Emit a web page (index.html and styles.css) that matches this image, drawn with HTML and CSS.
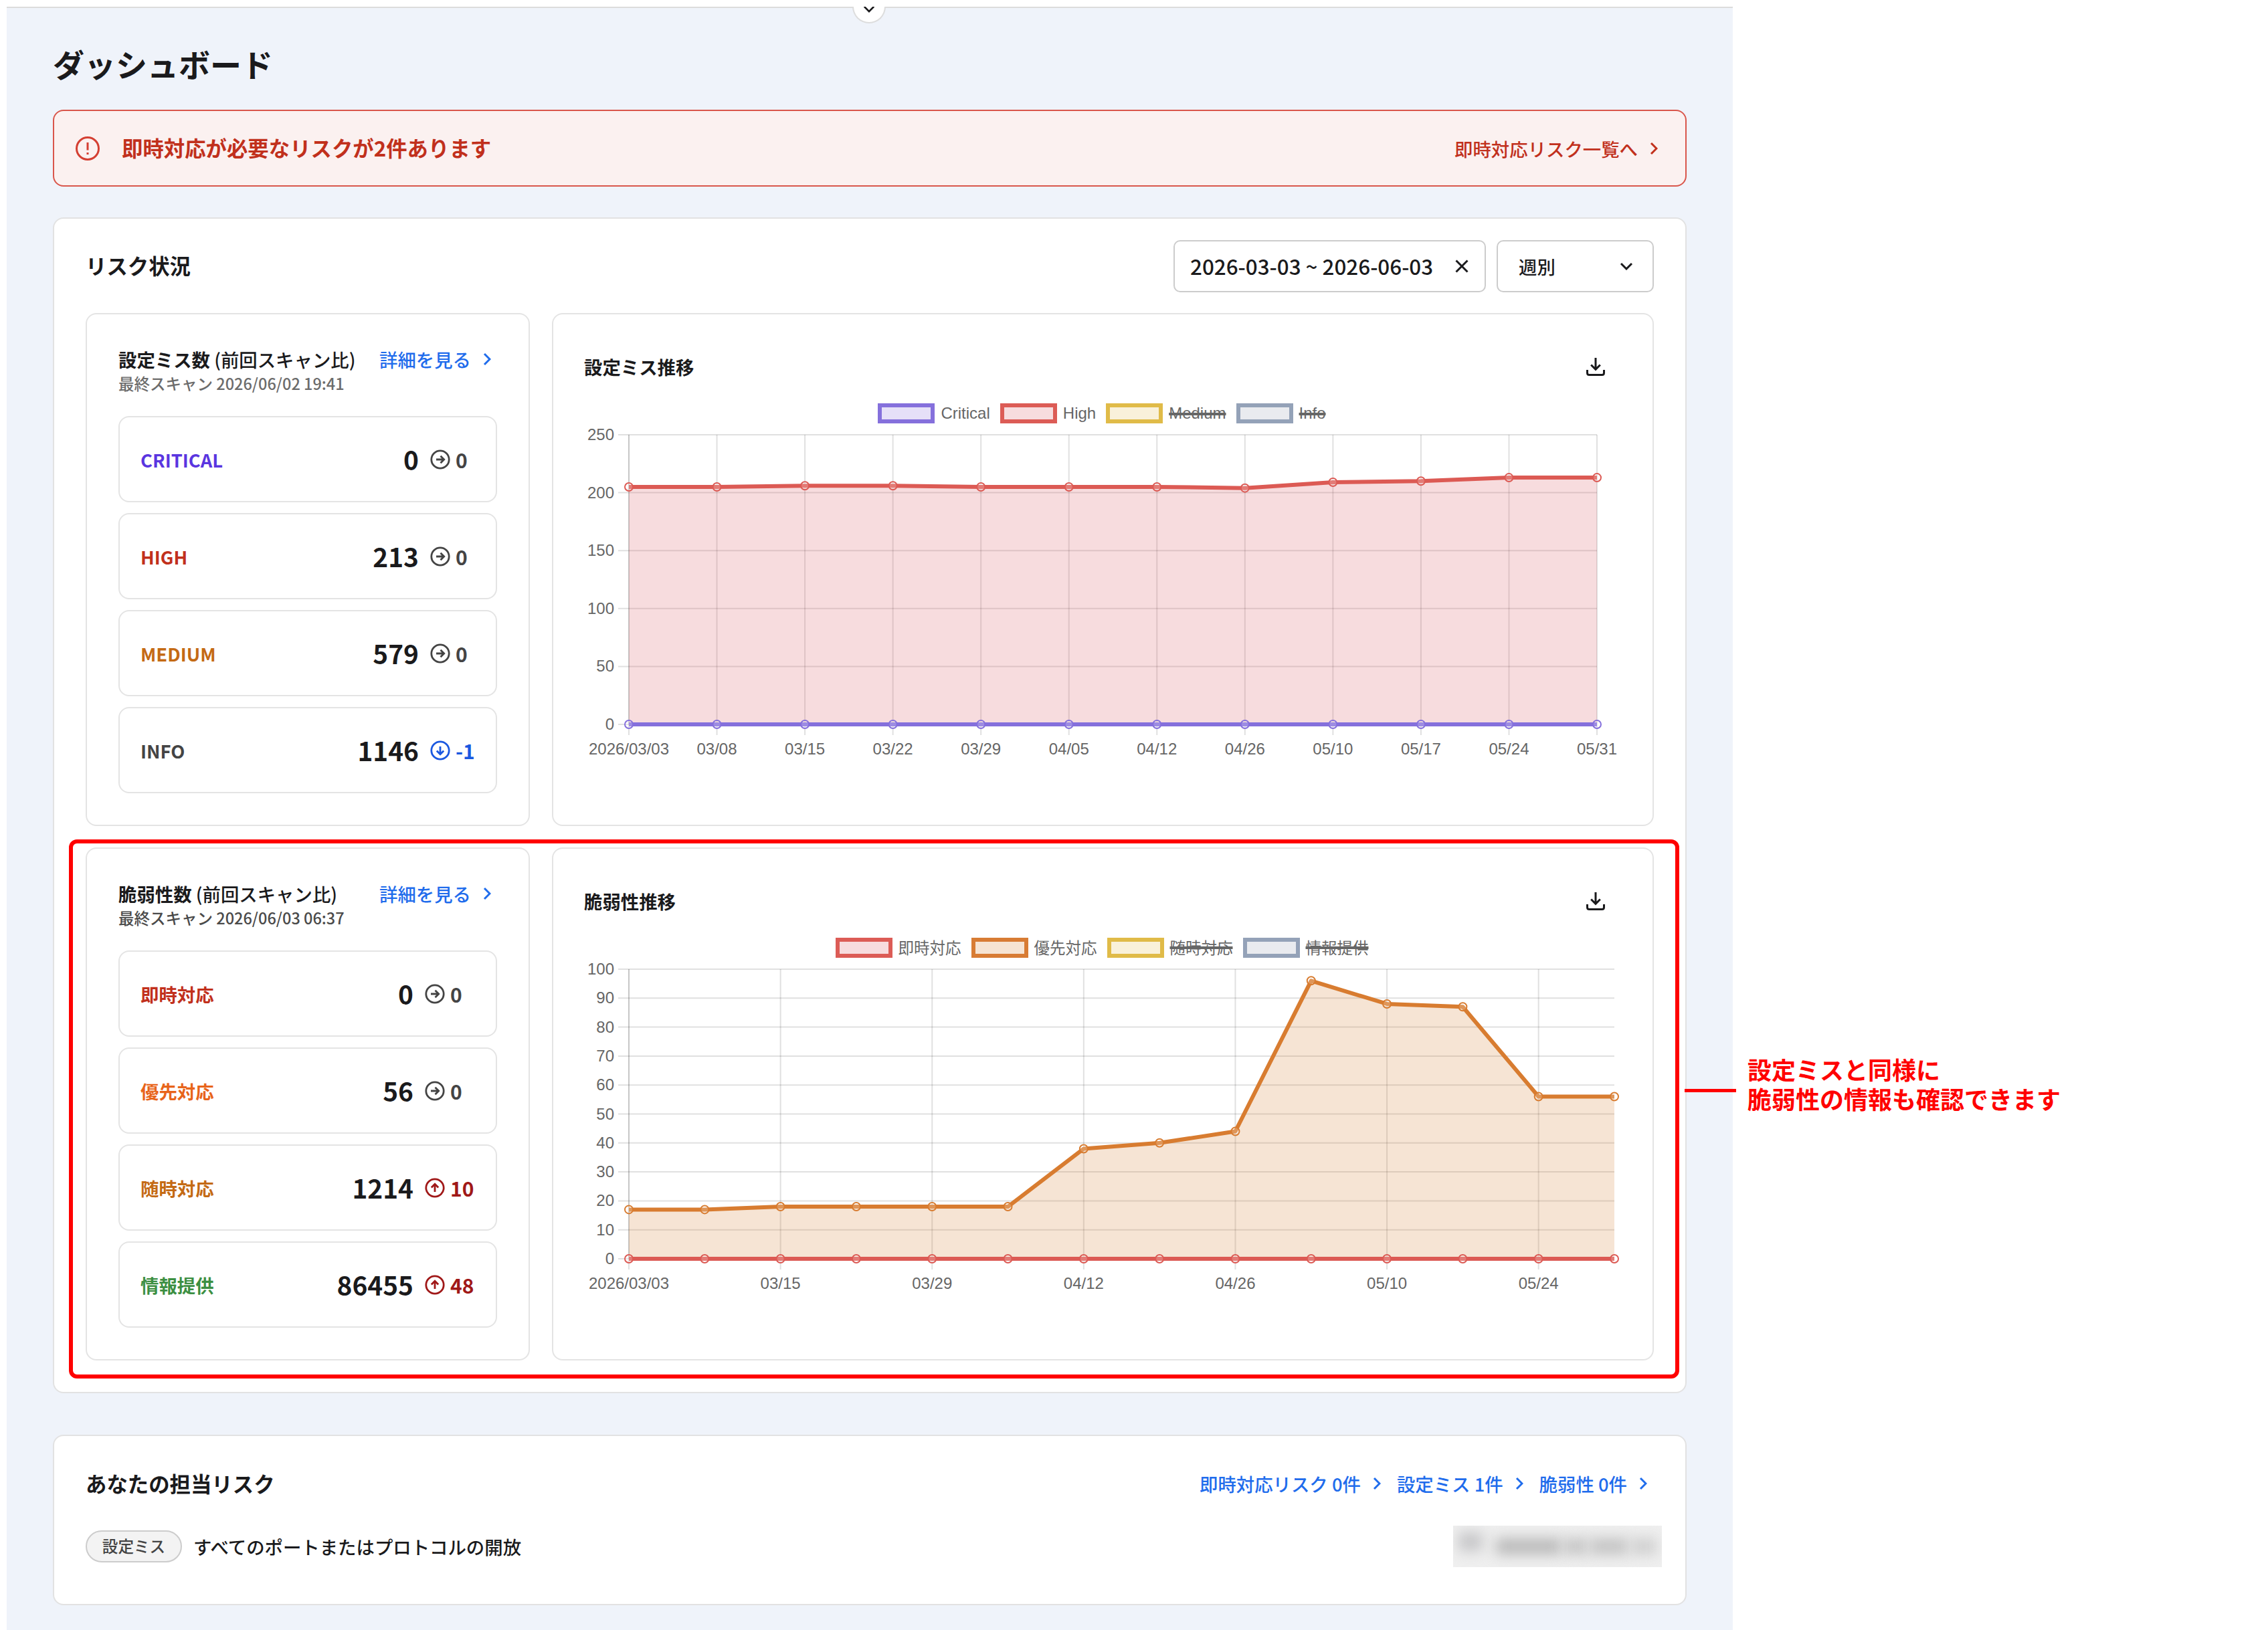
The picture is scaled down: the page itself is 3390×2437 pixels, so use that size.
FILE: index.html
```html
<!DOCTYPE html>
<html lang="ja">
<head>
    <meta charset="UTF-8">
    <meta name="viewport" content="width=device-width, initial-scale=1.0">
    <title>ダッシュボード</title>
    <link rel="stylesheet" href="styles.css">
</head>
<body>

<svg class="sprite" aria-hidden="true">
    <symbol id="chevron" viewBox="0 0 12 20"><path d="M2 2l8 8-8 8"/></symbol>
    <symbol id="chevron-down" viewBox="0 0 20 12"><path d="M2 2l8 8 8-8"/></symbol>
    <symbol id="close" viewBox="0 0 20 20"><path d="M1.500 1.500l17 17M18.500 1.500l-17 17"/></symbol>
    <symbol id="arrow" viewBox="0 0 30 30"><circle cx="15" cy="15" r="13.200"/><path d="M9 15h11.500M15.500 9.800l5.200 5.200-5.200 5.200"/></symbol>
    <symbol id="download" viewBox="0 0 30 30"><path d="M15 1v17M8.200 11.500l6.800 6.800 6.800-6.800M2.500 19v4.500q0 3 3 3h19q3 0 3-3v-4.500"/></symbol>
</svg>

<div class="page">
    <div class="toggle"><svg class="icon toggle-icon"><use href="#chevron-down"/></svg></div>

    <h1>ダッシュボード</h1>

    <div class="alert">
        <svg class="alert-icon" viewBox="0 0 38 38"><circle cx="19" cy="19" r="16.500"/><path d="M19 10v11.500M19 25v3"/></svg>
        <p class="alert-text">即時対応が必要なリスクが2件あります</p>
        <a class="link link-red">即時対応リスク一覧へ<svg class="icon chevron"><use href="#chevron"/></svg></a>
    </div>

    <section class="card status">
        <div class="card-head">
            <h2>リスク状況</h2>
            <div class="filters">
                <div class="field date">2026-03-03 ~ 2026-06-03<svg class="icon close"><use href="#close"/></svg></div>
                <div class="field select">週別<svg class="icon down"><use href="#chevron-down"/></svg></div>
            </div>
        </div>

        <div class="row">
            <div class="panel counts">
                <div class="counts-head">
                    <h3>設定ミス数 <span>(前回スキャン比)</span></h3>
                    <a class="link">詳細を見る<svg class="icon chevron"><use href="#chevron"/></svg></a>
                </div>
                <p class="scan">最終スキャン 2026/06/02 19:41</p>
                <ul class="narrow">
                    <li><b class="critical">CRITICAL</b><strong>0</strong><svg class="icon trend"><use href="#arrow"/></svg><em>0</em></li>
                    <li><b class="high">HIGH</b><strong>213</strong><svg class="icon trend"><use href="#arrow"/></svg><em>0</em></li>
                    <li><b class="medium">MEDIUM</b><strong>579</strong><svg class="icon trend"><use href="#arrow"/></svg><em>0</em></li>
                    <li class="fell"><b class="info">INFO</b><strong>1146</strong><svg class="icon trend"><use href="#arrow"/></svg><em>-1</em></li>
                </ul>
            </div>
            <div class="panel chart">
                <div class="chart-head">
                    <h3>設定ミス推移</h3>
                    <svg class="icon download"><use href="#download"/></svg>
                </div>
                <div class="legend">
                    <span class="item"><i class="purple"></i>Critical</span>
                    <span class="item"><i class="red"></i>High</span>
                    <span class="item off"><i class="yellow"></i><s>Medium</s></span>
                    <span class="item off"><i class="gray"></i><s>Info</s></span>
                </div>
                <svg class="plot" id="misconfigChart"></svg>
            </div>
        </div>

        <div class="row">
            <div class="panel counts">
                <div class="counts-head">
                    <h3>脆弱性数 <span>(前回スキャン比)</span></h3>
                    <a class="link">詳細を見る<svg class="icon chevron"><use href="#chevron"/></svg></a>
                </div>
                <p class="scan dark">最終スキャン 2026/06/03 06:37</p>
                <ul>
                    <li><b class="high">即時対応</b><strong>0</strong><svg class="icon trend"><use href="#arrow"/></svg><em>0</em></li>
                    <li><b class="orange">優先対応</b><strong>56</strong><svg class="icon trend"><use href="#arrow"/></svg><em>0</em></li>
                    <li class="rose"><b class="medium">随時対応</b><strong>1214</strong><svg class="icon trend"><use href="#arrow"/></svg><em>10</em></li>
                    <li class="rose"><b class="green">情報提供</b><strong>86455</strong><svg class="icon trend"><use href="#arrow"/></svg><em>48</em></li>
                </ul>
            </div>
            <div class="panel chart">
                <div class="chart-head">
                    <h3>脆弱性推移</h3>
                    <svg class="icon download"><use href="#download"/></svg>
                </div>
                <div class="legend legend-ja">
                    <span class="item"><i class="red"></i>即時対応</span>
                    <span class="item"><i class="brown"></i>優先対応</span>
                    <span class="item off"><i class="yellow"></i><s>随時対応</s></span>
                    <span class="item off"><i class="gray"></i><s>情報提供</s></span>
                </div>
                <svg class="plot" id="vulnChart"></svg>
            </div>
            <div class="highlight"></div>
            <div class="leader"></div>
            <p class="note">設定ミスと同様に<br>脆弱性の情報も確認できます</p>
        </div>
    </section>

    <section class="card mine">
        <div class="card-head">
            <h2>あなたの担当リスク</h2>
            <div class="links">
                <a class="link">即時対応リスク 0件<svg class="icon chevron"><use href="#chevron"/></svg></a>
                <a class="link">設定ミス 1件<svg class="icon chevron"><use href="#chevron"/></svg></a>
                <a class="link">脆弱性 0件<svg class="icon chevron"><use href="#chevron"/></svg></a>
            </div>
        </div>
        <div class="risk">
            <span class="tag">設定ミス</span>
            <span class="risk-name">すべてのポートまたはプロトコルの開放</span>
            <div class="masked"><i class="m1"></i><i class="m2"></i><i class="m3"></i><i class="m4"></i><i class="m5"></i></div>
        </div>
    </section>
</div>

<script src="script.js"></script>
</body>
</html>
```
FILE: styles.css
```css
* {
    box-sizing: border-box;
}
body {
    margin: 0;
    background: #fff;
    color: #1a1a1c;
    font-family: "Noto Sans CJK JP", sans-serif;
    font-size: 27.4px;
    overflow: hidden;
}
h1, h2, h3, p, ul {
    margin: 0;
    padding: 0;
}
.sprite {
    display: none;
}
.page {
    position: relative;
    width: 2580px;
    height: 2427px;
    margin: 10px 0 0 10px;
    padding: 47px 69px 0;
    background: #eff3fa;
    border-top: 2px solid #dcdcdc;
}
.icon {
    fill: none;
    stroke: currentColor;
    stroke-width: 3;
    flex: none;
    overflow: visible;
}

/* half-hidden header toggle */
.toggle {
    position: absolute;
    top: -2px;
    left: 1264px;
    width: 50px;
    height: 25px;
    background: #fff;
    border: 2px solid #ddd;
    border-top: 0;
    border-radius: 0 0 25px 25px;
    overflow: hidden;
}
.toggle-icon {
    display: block;
    width: 18px;
    height: 11px;
    margin: -2px auto 0;
}

h1 {
    height: 72px;
    line-height: 72px;
    font-size: 47px;
    font-weight: 700;
}
.alert {
    display: flex;
    align-items: center;
    height: 115px;
    margin-top: 33px;
    padding: 0 41px 0 31px;
    background: #fbf1f0;
    border: 2px solid #d9564b;
    border-radius: 16px;
    color: #c1301c;
}
.alert-icon {
    width: 38px;
    height: 38px;
    fill: none;
    stroke: #d43f32;
    stroke-width: 3;
}
.alert-text {
    flex: 1;
    margin: -2px 0 0 32px;
    font-size: 31.4px;
    font-weight: 700;
}
.link {
    display: flex;
    align-items: center;
    color: #1f6cec;
    font-weight: 500;
    white-space: nowrap;
}
.link-red {
    color: #c1301c;
}
.chevron {
    width: 12px;
    height: 20px;
    margin-left: 18px;
}

.card {
    background: #fff;
    border: 2px solid #e2e2e2;
    border-radius: 16px;
    padding: 0 47px;
}
.status {
    height: 1758px;
    margin-top: 46px;
}
.card-head {
    display: flex;
    align-items: center;
    justify-content: space-between;
}
.status .card-head {
    height: 141px;
}
h2 {
    font-size: 31.4px;
    font-weight: 700;
}
.status h2 {
    margin-top: -2px;
}
.filters {
    display: flex;
    gap: 16px;
}
.field {
    display: flex;
    align-items: center;
    justify-content: space-between;
    height: 78px;
    border: 2px solid #ccc;
    border-radius: 10px;
}
.date {
    width: 467px;
    padding: 0 24px 0 23px;
    font-size: 31.4px;
    font-weight: 500;
}
.select {
    width: 235px;
    padding: 0 29px 0 31px;
    font-weight: 500;
}
.close {
    width: 20px;
    height: 20px;
}
.down {
    width: 20px;
    height: 12px;
}

.row {
    position: relative;
    display: flex;
    gap: 33px;
    height: 767px;
    margin-bottom: 32px;
}
.panel {
    border: 2px solid #e4e4e4;
    border-radius: 16px;
}
.counts {
    width: 664px;
    padding: 46px 47px 0;
}
.chart {
    flex: 1;
    padding: 0 46px;
}
.counts-head {
    display: flex;
    align-items: center;
    justify-content: space-between;
    height: 41px;
    padding-right: 9px;
}
h3 {
    font-size: 27.4px;
    font-weight: 700;
    white-space: nowrap;
}
h3 span {
    font-weight: 500;
}
.scan {
    height: 37px;
    line-height: 33px;
    font-size: 23.5px;
    font-weight: 500;
    color: #6c6c6c;
}
.scan.dark {
    color: #4a4a4a;
}

.counts ul {
    display: grid;
    gap: 16px;
    margin-top: 28px;
    list-style: none;
}
.counts li {
    display: flex;
    align-items: center;
    height: 129px;
    padding: 0 31px;
    border: 2px solid #e4e4e4;
    border-radius: 16px;
    color: #444;
}
.counts b {
    flex: 1;
    font-weight: 700;
}
.counts strong {
    margin-top: -2px;
    font-size: 38.8px;
    color: #1a1a1c;
}
.trend {
    width: 30px;
    height: 30px;
    margin: 0 8px 0 17px;
    stroke-width: 2.8;
}
.counts em {
    width: 37px;
    font-size: 30px;
    font-style: normal;
    font-weight: 700;
}
.narrow em {
    width: 29px;
}
.fell .trend {
    transform: rotate(90deg);
}
.rose .trend {
    transform: rotate(-90deg);
}
.fell {
    --c: #1a58e0;
}
.rose {
    --c: #a01818;
}
.fell .trend, .fell em, .rose .trend, .rose em {
    color: var(--c);
}
.critical { color: #5a35e0; }
.high { color: #c1301c; }
.medium { color: #c46a14; }
.info { color: #444; }
.orange { color: #e8641a; }
.green { color: #3c8f42; }

.chart-head {
    display: flex;
    align-items: center;
    justify-content: space-between;
    height: 108px;
    padding: 49px 24px 0 0;
}
.chart-head h3 {
    margin-top: -2px;
}
.download {
    width: 30px;
    height: 30px;
}
.legend {
    display: flex;
    justify-content: center;
    gap: 15px;
    height: 30px;
    margin-top: 25px;
    padding-right: 3px;
    font: 24px/30px "Liberation Sans", sans-serif;
    color: #666;
}
.legend-ja {
    font: 23.5px/28px "Noto Sans CJK JP", sans-serif;
}
.item {
    display: flex;
    gap: 9px;
}
.item i {
    width: 85px;
    height: 30px;
    border: 6px solid;
}
.item s {
    text-decoration-thickness: 4px;
}
.purple { color: #8570dc; background: #e6e0f8; }
.red { color: #dc5c56; background: #f7dcde; }
.yellow { color: #e0bb48; background: #f9f1da; }
.gray { color: #94a2b8; background: #e9ebef; }
.brown { color: #d87c34; background: #f6e4d3; }
.item i.purple { border-color: #8570dc; }

.plot {
    display: block;
    width: 100%;
    height: 500px;
    margin-top: 5px;
    overflow: visible;
}
.plot text {
    font: 24px "Liberation Sans", sans-serif;
    fill: #666;
}
.grid {
    stroke: rgba(0, 0, 0, .12);
    stroke-width: 2;
}
.axis {
    stroke: rgba(0, 0, 0, .22);
    stroke-width: 2;
}

/* annotation over the second row */
.highlight {
    position: absolute;
    top: -12px;
    left: -25px;
    width: 2407px;
    height: 806px;
    border: 6px solid #f00;
    border-radius: 12px;
}
.leader {
    position: absolute;
    top: 361px;
    left: 2390px;
    width: 77px;
    height: 5px;
    background: #f00;
}
.note {
    position: absolute;
    top: 309px;
    left: 2484px;
    font-size: 36px;
    font-weight: 700;
    line-height: 44px;
    color: #f00;
    white-space: nowrap;
}

.mine {
    height: 255px;
    margin-top: 62px;
}
.mine .card-head {
    height: 141px;
    padding-right: 10px;
}
.links {
    display: flex;
    gap: 24px;
}
.risk {
    display: flex;
    align-items: center;
    height: 48px;
    margin-right: -12px;
}
.tag {
    width: 144px;
    height: 48px;
    line-height: 43px;
    border: 2px solid #ccc;
    border-radius: 24px;
    background: #f3f3f3;
    font-size: 23.6px;
    font-weight: 500;
    text-align: center;
    color: #444;
}
.risk-name {
    flex: 1;
    margin-left: 17px;
    font-weight: 500;
}
.masked {
    display: flex;
    align-items: center;
    gap: 4px;
    width: 312px;
    height: 62px;
    padding: 0 8px;
    background: #efefef;
    overflow: hidden;
}
.masked i {
    height: 24px;
    background: #c2c2c2;
    filter: blur(10px);
}
.masked .m1 { width: 36px; height: 28px; margin: -14px 16px 0 0; background: #c6c6c8; }
.masked .m2 { width: 98px; background: #b8b8b8; }
.masked .m3 { width: 34px; }
.masked .m4 { width: 58px; }
.masked .m5 { width: 38px; background: #cecece; }
```
FILE: script.js
```js
const LEFT = 67;
const TOP = 12;
const HEIGHT = 433;

function drawChart(id, opts) {
    const n = opts.labels.length;
    const x = i => LEFT + i * opts.width / (n - 1);
    const y = v => TOP + HEIGHT - v * HEIGHT / opts.max;
    let out = '';

    for (let v = 0; v <= opts.max; v += opts.step) {
        out += `<path class="grid" d="M${LEFT - 16} ${y(v)}H${LEFT + opts.width}"/>`;
        out += `<text x="${LEFT - 22}" y="${y(v) + 8}" text-anchor="end">${v}</text>`;
    }
    opts.labels.forEach((label, i) => {
        if (!label) return;
        out += `<path class="${i ? 'grid' : 'axis'}" d="M${x(i)} ${TOP}V${TOP + HEIGHT + (i ? 16 : 0)}"/>`;
        if (!i) out += `<path class="grid" d="M${x(i)} ${TOP + HEIGHT}v16"/>`;
        out += `<text x="${x(i)}" y="${TOP + HEIGHT + 45}" text-anchor="middle">${label}</text>`;
    });

    opts.series.forEach(s => {
        const line = s.data.map((v, i) => `${x(i)},${y(v)}`).join(' ');
        out += `<polygon points="${x(0)},${y(0)} ${line} ${x(n - 1)},${y(0)}" fill="${s.fill}" fill-opacity=".2"/>`;
        out += `<polyline points="${line}" fill="none" stroke="${s.color}" stroke-width="6" stroke-linejoin="round"/>`;
        s.data.forEach((v, i) => {
            out += `<circle cx="${x(i)}" cy="${y(v)}" r="6" fill="#fff" fill-opacity=".2" stroke="${s.color}" stroke-width="2"/>`;
        });
    });
    document.getElementById(id).innerHTML = out;
}

drawChart('misconfigChart', {
    width: 1447,
    max: 250,
    step: 50,
    labels: ['2026/03/03', '03/08', '03/15', '03/22', '03/29', '04/05', '04/12', '04/26', '05/10', '05/17', '05/24', '05/31'],
    series: [
        { color: '#dc5a54', fill: '#d55258', data: [205, 205, 206, 206, 205, 205, 205, 204, 209, 210, 213, 213] },
        { color: '#8570dc', fill: '#8570dc', data: [0, 0, 0, 0, 0, 0, 0, 0, 0, 0, 0, 0] }
    ]
});

drawChart('vulnChart', {
    width: 1473,
    max: 100,
    step: 10,
    labels: ['2026/03/03', '', '03/15', '', '03/29', '', '04/12', '', '04/26', '', '05/10', '', '05/24', ''],
    series: [
        { color: '#d87c30', fill: '#d07828', data: [17, 17, 18, 18, 18, 18, 38, 40, 44, 96, 88, 87, 56, 56] },
        { color: '#dc5a54', fill: '#d55258', data: [0, 0, 0, 0, 0, 0, 0, 0, 0, 0, 0, 0, 0, 0] }
    ]
});
```
